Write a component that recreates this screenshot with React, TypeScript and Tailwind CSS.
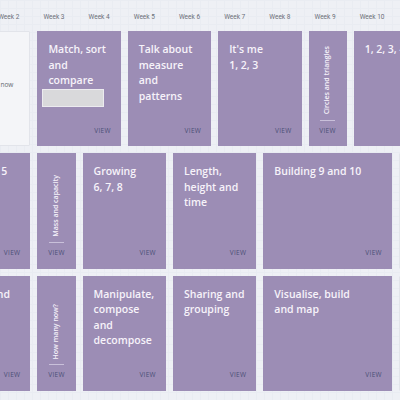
import React from "react";

type Card = {
  span: string;
  kind: "topic" | "vertical" | "blank";
  lines?: string[];
  note?: string;
  placeholder?: boolean;
};

const WEEKS = ["Week 1", "Week 2", "Week 3", "Week 4", "Week 5", "Week 6", "Week 7", "Week 8", "Week 9", "Week 10", "Week 11", "Week 12"];

const CARDS: Card[] = [
  // row 1
  { span: "col-span-2", kind: "blank", note: "Subitise how many now" },
  { span: "col-span-2", kind: "topic", lines: ["Match, sort", "and", "compare"], placeholder: true },
  { span: "col-span-2", kind: "topic", lines: ["Talk about", "measure", "and", "patterns"] },
  { span: "col-span-2", kind: "topic", lines: ["It's me", "1, 2, 3"] },
  { span: "col-span-1", kind: "vertical", lines: ["Circles and triangles"] },
  { span: "col-span-3", kind: "topic", lines: ["1, 2, 3, 4, 5"] },
  // row 2
  { span: "col-span-2", kind: "topic", lines: ["Grow to 5"] },
  { span: "col-span-1", kind: "vertical", lines: ["Mass and capacity"] },
  { span: "col-span-2", kind: "topic", lines: ["Growing", "6, 7, 8"] },
  { span: "col-span-2", kind: "topic", lines: ["Length,", "height and", "time"] },
  { span: "col-span-3", kind: "topic", lines: ["Building 9 and 10"] },
  { span: "col-span-2", kind: "blank" },
  // row 3
  { span: "col-span-2", kind: "topic", lines: ["Order and", "place"] },
  { span: "col-span-1", kind: "vertical", lines: ["How many now?"] },
  { span: "col-span-2", kind: "topic", lines: ["Manipulate,", "compose", "and", "decompose"] },
  { span: "col-span-2", kind: "topic", lines: ["Sharing and", "grouping"] },
  { span: "col-span-3", kind: "topic", lines: ["Visualise, build", "and map"] },
  { span: "col-span-2", kind: "blank" },
];

function View() {
  return (
    <span className="text-[6.5px] leading-none tracking-[0.3px] text-[#4b4f76] font-medium">
      VIEW
    </span>
  );
}

function CardBox({ card }: { card: Card }) {
  if (card.kind === "blank") {
    return (
      <div className={`${card.span} bg-[#f4f5f8] border border-[#e2e4ea] rounded-[1px] flex items-center justify-end pr-[16px] pb-[8px]`}>
        {card.note && (
          <span className="text-[6.5px] text-[#666a72] whitespace-nowrap">{card.note}</span>
        )}
      </div>
    );
  }

  if (card.kind === "vertical") {
    return (
      <div className={`${card.span} bg-[#9c8db5] flex flex-col items-center pb-[12px]`}>
        <div className="flex-1 flex items-end justify-center pb-[5px]">
          <span className="[writing-mode:vertical-rl] rotate-180 text-[7px] font-semibold text-[#f6f2fa] whitespace-nowrap">
            {card.lines?.[0]}
          </span>
        </div>
        <div className="w-[15px] h-px bg-[#c9c0da] mb-[7px]" />
        <View />
      </div>
    );
  }

  return (
    <div className={`${card.span} bg-[#9c8db5] flex flex-col pt-[11px] pl-[11px] pr-[10px] pb-[12px] min-w-0`}>
      <div className="text-[10.5px] leading-[15.5px] font-semibold text-[#f7f3fa] whitespace-nowrap">
        {card.lines?.map((l) => (
          <div key={l}>{l}</div>
        ))}
      </div>
      {card.placeholder && (
        <div className="-ml-[6px] w-[62px] h-[18px] bg-[#d9d9db] border border-[#ecebef]" />
      )}
      <div className="flex-1" />
      <div className="flex justify-end">
        <View />
      </div>
    </div>
  );
}

export default function App() {
  return (
    <div
      className="w-[400px] h-[400px] overflow-hidden bg-[#eef0f5] bg-[linear-gradient(#e9ecf2_1px,transparent_1px),linear-gradient(90deg,#e9ecf2_1px,transparent_1px)] bg-[size:8px_8px]"
      style={{ fontFamily: "'Open Sans', 'Noto Sans', sans-serif" }}
    >
      <div className="ml-[-53px] w-[600px]">
        <div className="grid grid-cols-[repeat(12,38.2px)] gap-x-[7px] h-[31px]">
          {WEEKS.map((w) => (
            <div key={w} className="pl-[6px] pt-[13px] text-[6.5px] leading-[8px] text-[#6b6f78] whitespace-nowrap" style={{ fontFamily: "Roboto, sans-serif" }}>
              {w}
            </div>
          ))}
        </div>
        <div className="grid grid-cols-[repeat(12,38.2px)] grid-rows-[repeat(3,115.3px)] gap-[7px]">
          {CARDS.map((c, i) => (
            <CardBox key={i} card={c} />
          ))}
        </div>
      </div>
    </div>
  );
}
